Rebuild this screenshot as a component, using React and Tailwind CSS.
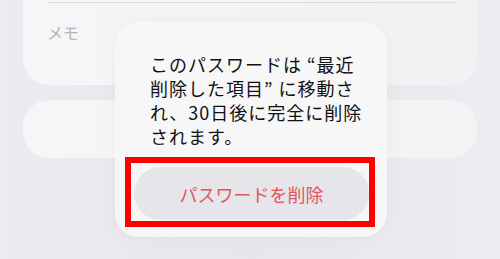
export default function App() {
  return (
    <div
      className="relative w-[500px] h-[259px] overflow-hidden bg-gradient-to-r from-[#ececf0] via-[#e6e6eb] to-[#ececf1]"
      style={{ fontFamily: '"Noto Sans CJK JP", "Noto Sans", sans-serif' }}
    >
      {/* background list */}
      <div className="flex flex-col gap-[15px] px-[23px]">
        <div className="h-[85px] rounded-b-[26px] bg-gradient-to-r from-[#f6f6f8] to-[#f2f2f4] pl-[24px] pr-[20px]">
          <div className="h-[3px] border-b border-[#dcdce0]" />
          <div className="pt-[19px] text-[16px] leading-[20px] text-[#b4b4b8]">メモ</div>
        </div>
        <div className="h-[58px] rounded-[26px] bg-gradient-to-r from-[#f6f6f8] to-[#f3f3f5]" />
      </div>

      {/* faint red glow behind the popover */}
      <div className="absolute left-[222px] top-[112px] h-[26px] w-[60px] rounded-full bg-[#ff9a9a] opacity-40 blur-[10px]" />

      {/* popover */}
      <div className="absolute left-[115px] top-[22px] w-[272px] h-[215px] rounded-[24px] bg-[#f7f7f7]/95 shadow-[0_0_20px_rgba(0,0,0,0.04)] pt-[30px] pl-[10px]">
        <p className="pl-[25px] text-[18px] leading-[24px] text-[#111113] tracking-[1px] whitespace-nowrap">
          このパスワードは “最近
          <br />
          削除した項目” に移動さ
          <br />
          れ、30日後に完全に削除
          <br />
          されます。
        </p>
        <div className="mt-[9px] w-[250px] h-[70px] border-[6px] border-[#ff0000] pl-[3px] pt-[4px] pb-[1px]">
          <button className="flex h-full w-full items-center justify-center rounded-full bg-[#e6e6ea] text-[18px] leading-[24px] text-[#e4535c]">
            パスワードを削除
          </button>
        </div>
      </div>
    </div>
  )
}
